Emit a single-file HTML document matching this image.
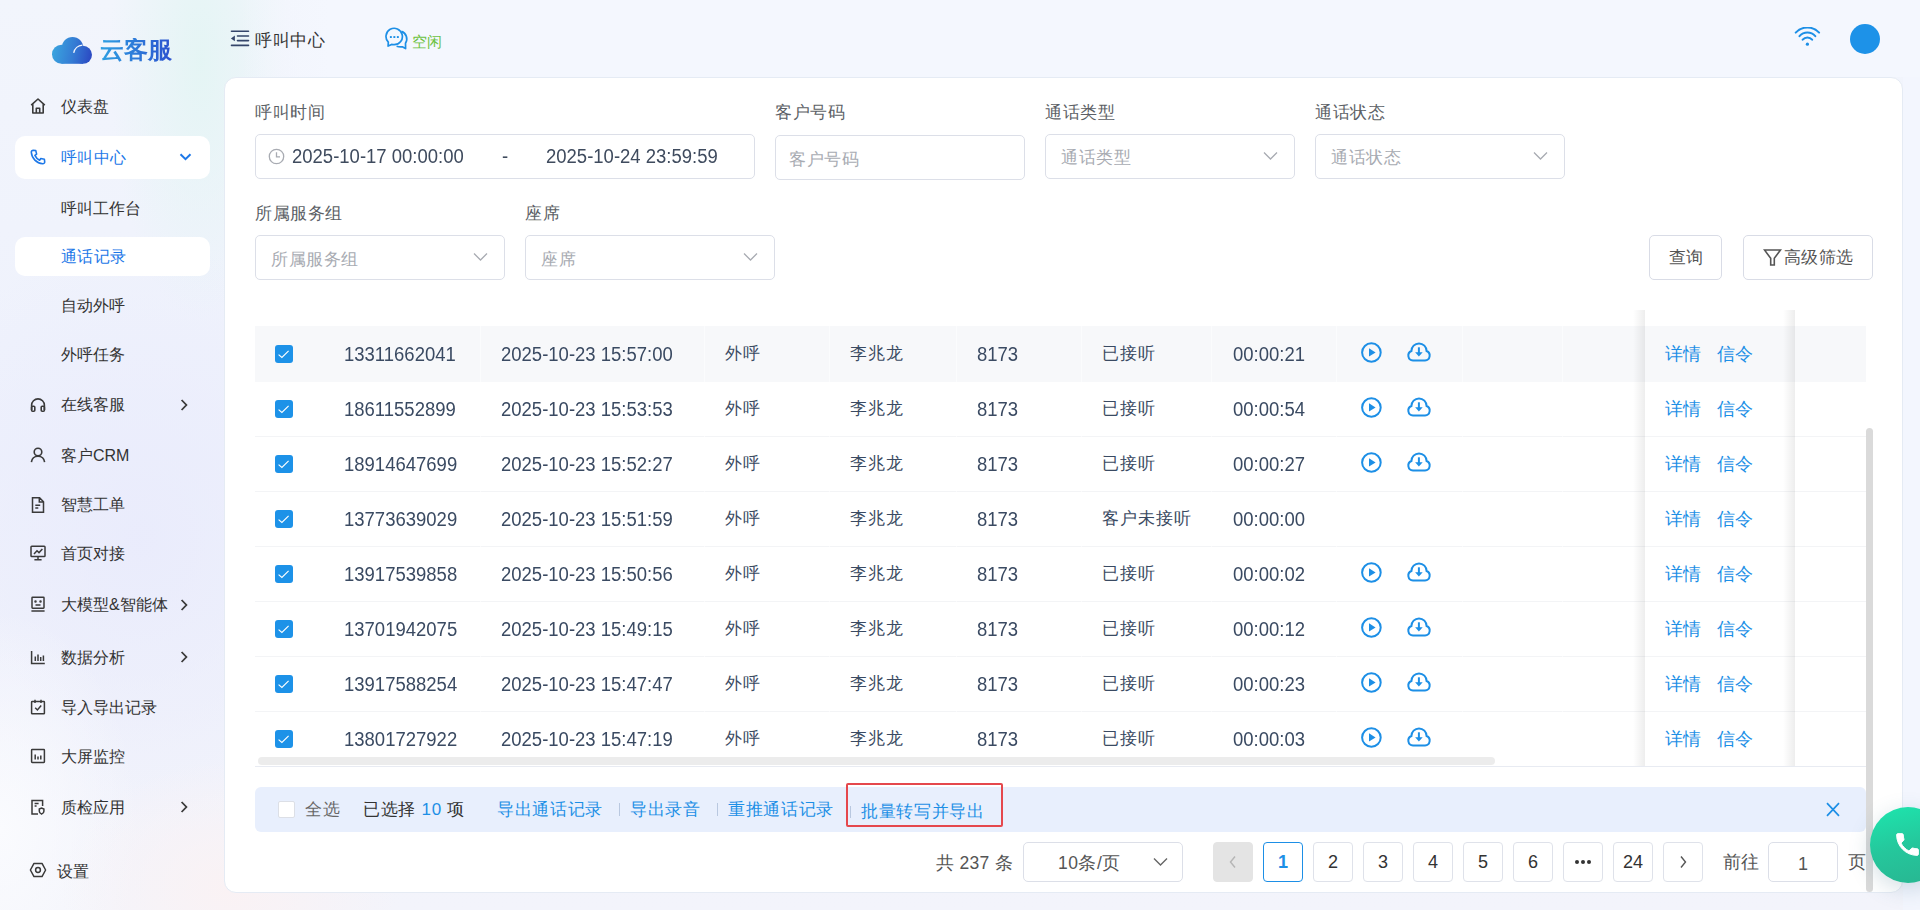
<!DOCTYPE html>
<html><head><meta charset="utf-8"><title>通话记录</title>
<style>
*{margin:0;padding:0;box-sizing:border-box}
html,body{width:1920px;height:910px;overflow:hidden}
body{position:relative;font-family:"Liberation Sans",sans-serif;color:#333;
 background:#f3f6fd;}
.a{position:absolute;white-space:nowrap;line-height:1}
.bg{position:absolute;left:0;top:0;width:1920px;height:910px;
 background:
  radial-gradient(ellipse 90px 260px at 200px 60px, rgba(226,245,243,0.85), rgba(226,245,243,0) 100%),
  radial-gradient(ellipse 170px 130px at 230px 890px, rgba(250,242,244,1), rgba(250,242,244,0) 100%),
  radial-gradient(ellipse 140px 220px at 0px 830px, rgba(250,251,254,1), rgba(250,251,254,0) 100%),
  radial-gradient(ellipse 260px 300px at 140px 540px, rgba(233,235,252,0.9), rgba(233,235,252,0) 100%),
  linear-gradient(180deg,#f2f5fc 0%, #eef1fc 50%, #f3f4fb 100%);}
.hdr{position:absolute;left:240px;top:0;width:1680px;height:77px;background:linear-gradient(90deg,rgba(244,247,254,0) 0px,#f4f7fe 90px,#f4f7fe 100%)}
.rbg{position:absolute;left:1903px;top:77px;width:17px;height:833px;background:#f3f6fe}
.bbg{position:absolute;left:225px;top:891px;width:1695px;height:19px;background:#f1f4fc}
.card{position:absolute;left:224px;top:77px;width:1679px;height:816px;background:#fff;border-radius:12px;border:1px solid #e5ebf4}
.logo{font-size:24px;font-weight:600;background:linear-gradient(90deg,#2ea0e2,#2b52cf);-webkit-background-clip:text;color:transparent}
.menu{font-size:16px;letter-spacing:0.3px;color:#363636}
.menu.act{color:#1d78e8}
.mact{position:absolute;left:15px;width:195px;background:#fff;border-radius:10px}
.lbl{font-size:17px;letter-spacing:0.6px;color:#5c5f66}
.inp{position:absolute;height:45px;border:1px solid #dcdfe8;border-radius:5px;background:#fff}
.ph{font-size:17px;letter-spacing:0.6px;color:#a8abb2}
.btn{position:absolute;height:45px;border:1px solid #d9dce6;border-radius:5px;background:#fff}
.btxt{font-size:17px;letter-spacing:0.3px;color:#555}
.row{position:absolute;left:255px;width:1611px;height:55px;border-bottom:1px solid #f3f4f6}
.row.hov{background:#f7f8fa;border-bottom-color:#f7f8fa}
.cb{position:absolute;width:18px;height:18px;border-radius:3px}
.cb.on{background:#1d92e8}
.td{font-size:18.5px;color:#3a4a62}
.lnk{font-size:18px;color:#1d8fe6}
.fix{position:absolute;top:310px;height:456px;background:#fff}
.sel{position:absolute;left:255px;top:787px;width:1611px;height:45px;background:#e8effd;border-radius:6px}
.stx{font-size:17px;letter-spacing:0.7px}
.pg{position:absolute;top:842px;width:40px;height:40px;border:1px solid #dfe2ea;border-radius:4px;background:#fff;font-size:18px;color:#333;text-align:center;line-height:38px}
.td.cn{font-size:17px;letter-spacing:1px}
.td:not(.cn){transform:scaleY(1.08);transform-origin:0 78%}

</style></head><body>
<div class="bg"></div>
<div class="hdr"></div>
<div class="rbg"></div>

<!-- logo -->
<svg class="a" style="left:52px;top:36px" width="41" height="29" viewBox="0 0 41 29"><defs><linearGradient id="lg1" gradientUnits="userSpaceOnUse" x1="0" y1="14" x2="40" y2="22"><stop offset="0" stop-color="#3aa5df"/><stop offset="0.55" stop-color="#3479d3"/><stop offset="1" stop-color="#2b47c2"/></linearGradient></defs><g fill="url(#lg1)"><circle cx="9.5" cy="18.3" r="9.5"/><circle cx="31" cy="18.8" r="9"/><circle cx="20.5" cy="11.6" r="10.7"/><rect x="9.5" y="14" width="21.5" height="13.8"/></g><path d="M21.7 16.9 A9.7 9.7 0 0 1 30.4 9.1" fill="none" stroke="#f2f6fd" stroke-width="1.3"/></svg>
<div class="a logo" style="left:100px;top:38px">云客服</div>
<div class="a menuNone" style="left:61px;top:99px">仪表盘</div>
<div class="mact" style="top:136px;height:43px"></div>
<div class="a menu act" style="left:61px;top:150px">呼叫中心</div>
<div class="a menuNone" style="left:61px;top:201px">呼叫工作台</div>
<div class="mact" style="top:237px;height:39px"></div>
<div class="a menu act" style="left:61px;top:249px">通话记录</div>
<div class="a menuNone" style="left:61px;top:298px">自动外呼</div>
<div class="a menuNone" style="left:61px;top:347px">外呼任务</div>
<div class="a menuNone" style="left:61px;top:397px">在线客服</div>
<div class="a menuNone" style="left:61px;top:448px">客户CRM</div>
<div class="a menuNone" style="left:61px;top:497px">智慧工单</div>
<div class="a menuNone" style="left:61px;top:546px">首页对接</div>
<div class="a menuNone" style="left:61px;top:597px">大模型&amp;智能体</div>
<div class="a menuNone" style="left:61px;top:650px">数据分析</div>
<div class="a menuNone" style="left:61px;top:700px">导入导出记录</div>
<div class="a menuNone" style="left:61px;top:749px">大屏监控</div>
<div class="a menuNone" style="left:61px;top:800px">质检应用</div>
<div class="a menuNone" style="left:57px;top:864px">设置</div>
<!-- sidebar icons -->
<svg class="a" style="left:29px;top:97px" width="18" height="18" viewBox="0 0 18 18" fill="none" stroke="#3a3a3a" stroke-width="1.6" stroke-linejoin="round"><path d="M2.2 8.2 L9 2 L15.8 8.2 M3.8 6.9 V16 H14.2 V6.9 M7.3 16 V11.3 H10.7 V16"/></svg>
<svg class="a" style="left:29px;top:148px" width="18" height="18" viewBox="0 0 18 18" fill="none" stroke="#1d78e8" stroke-width="1.6" stroke-linejoin="round"><path d="M4.2 2.3 L6.8 2.6 L7.6 6.2 L5.9 7.4 C6.9 9.6 8.5 11.2 10.6 12.2 L11.8 10.5 L15.4 11.3 L15.7 13.9 C15.7 15 14.8 15.8 13.7 15.7 C7.5 15.2 2.8 10.5 2.3 4.3 C2.2 3.2 3.1 2.3 4.2 2.3 Z"/></svg>
<svg class="a" style="left:179px;top:152px" width="13" height="10" viewBox="0 0 13 10" fill="none" stroke="#1d78e8" stroke-width="2"><path d="M1.5 2.2 L6.5 7.2 L11.5 2.2"/></svg>
<svg class="a" style="left:29px;top:396px" width="18" height="18" viewBox="0 0 18 18" fill="none" stroke="#3a3a3a" stroke-width="1.6"><path d="M2.6 14 V9.3 A6.4 6.4 0 0 1 15.4 9.3 V14"/><rect x="2.6" y="10.3" width="3.2" height="5" rx="1"/><rect x="12.2" y="10.3" width="3.2" height="5" rx="1"/></svg>
<svg class="a" style="left:179px;top:398px" width="10" height="14" viewBox="0 0 10 14" fill="none" stroke="#3a3a3a" stroke-width="1.8"><path d="M2.6 2 L7.4 7 L2.6 12"/></svg>
<svg class="a" style="left:29px;top:446px" width="18" height="18" viewBox="0 0 18 18" fill="none" stroke="#3a3a3a" stroke-width="1.6"><circle cx="9" cy="6" r="3.8"/><path d="M2.4 16.2 C2.9 12.3 5.6 10.3 9 10.3 C12.4 10.3 15.1 12.3 15.6 16.2"/></svg>
<svg class="a" style="left:29px;top:496px" width="18" height="18" viewBox="0 0 18 18" fill="none" stroke="#3a3a3a" stroke-width="1.5"><path d="M3.5 1.8 H10.6 L14.5 5.7 V16.2 H3.5 Z M10.3 1.8 V6 H14.5 M6.3 9.2 H11.2 M6.3 12 H9.3"/></svg>
<svg class="a" style="left:29px;top:544px" width="18" height="18" viewBox="0 0 18 18" fill="none" stroke="#3a3a3a" stroke-width="1.5"><rect x="2" y="2.2" width="14" height="10.3" rx="0.8"/><path d="M5 10 L8 6.8 L10 8.6 L13.4 5 M9 12.5 V15.6 M5.4 15.8 H12.6"/></svg>
<svg class="a" style="left:29px;top:595px" width="18" height="18" viewBox="0 0 18 18" fill="none" stroke="#3a3a3a" stroke-width="1.5"><rect x="3" y="2.2" width="12" height="11" rx="0.6"/><path d="M2.4 16 H15.6 M6.5 10 H11.5"/><circle cx="6.5" cy="6.6" r="0.5" fill="#3a3a3a"/><circle cx="11.5" cy="6.6" r="0.5" fill="#3a3a3a"/></svg>
<svg class="a" style="left:179px;top:598px" width="10" height="14" viewBox="0 0 10 14" fill="none" stroke="#3a3a3a" stroke-width="1.8"><path d="M2.6 2 L7.4 7 L2.6 12"/></svg>
<svg class="a" style="left:29px;top:648px" width="18" height="18" viewBox="0 0 18 18" fill="none" stroke="#3a3a3a" stroke-width="1.5"><path d="M2.6 3 V15.6 H15.8 M6.3 13 V8.5 M9 13 V6.5 M11.7 13 V9 M14.4 13 V7.5"/></svg>
<svg class="a" style="left:179px;top:650px" width="10" height="14" viewBox="0 0 10 14" fill="none" stroke="#3a3a3a" stroke-width="1.8"><path d="M2.6 2 L7.4 7 L2.6 12"/></svg>
<svg class="a" style="left:29px;top:698px" width="18" height="18" viewBox="0 0 18 18" fill="none" stroke="#3a3a3a" stroke-width="1.5"><rect x="2.6" y="3.6" width="12.8" height="12.2" rx="0.6"/><path d="M6 1.8 V5 M12 1.8 V5 M6.2 9.8 L8.4 12 L12.2 7.6"/></svg>
<svg class="a" style="left:29px;top:747px" width="18" height="18" viewBox="0 0 18 18" fill="none" stroke="#3a3a3a" stroke-width="1.5"><rect x="2.6" y="2.6" width="12.8" height="12.8" rx="0.6"/><path d="M6.2 12.6 V7.4 M9 12.6 V9.6 M11.8 12.6 V8.6"/></svg>
<svg class="a" style="left:29px;top:798px" width="18" height="18" viewBox="0 0 18 18" fill="none" stroke="#3a3a3a" stroke-width="1.5"><path d="M9 16 H3 V2.4 H13.6 V8 M5.6 5.4 H9.6 M5.6 8 H7.6"/><path d="M10.3 11 L12.6 10 L14.9 11 V13.2 C14.9 14.6 13.9 15.6 12.6 16.1 C11.3 15.6 10.3 14.6 10.3 13.2 Z"/></svg>
<svg class="a" style="left:179px;top:800px" width="10" height="14" viewBox="0 0 10 14" fill="none" stroke="#3a3a3a" stroke-width="1.8"><path d="M2.6 2 L7.4 7 L2.6 12"/></svg>
<svg class="a" style="left:29px;top:862px" width="18" height="16" viewBox="0 0 18 16" fill="none" stroke="#3a3a3a" stroke-width="1.5" stroke-linejoin="round"><path d="M5 1.4 H13 L16.6 8 L13 14.6 H5 L1.4 8 Z"/><circle cx="9" cy="8" r="2.4"/></svg>

<!-- header -->
<svg class="a" style="left:230px;top:30px" width="20" height="17" viewBox="0 0 20 17" fill="none" stroke="#34456a" stroke-width="1.6" stroke-linecap="round"><path d="M1.5 1.3 H18.5 M7.5 6 H18.5 M7.5 10.6 H18.5 M1.5 15.4 H18.5"/><path d="M0.9 8.4 L4.9 5.6 V11.2 Z" fill="#34456a" stroke="none"/></svg>
<div class="a" style="left:255px;top:32px;font-size:17px;letter-spacing:0.5px;color:#333">呼叫中心</div>
<svg class="a" style="left:384px;top:27px" width="25" height="23" viewBox="0 0 25 23" fill="none" stroke="#1d8fe6" stroke-width="1.7" stroke-linejoin="round"><path d="M10.2 17.7 A8.2 8.2 0 1 0 4.3 15.2 L4.1 19.1 L7.6 17.4 C8.4 17.6 9.3 17.7 10.2 17.7 Z"/><path d="M17.4 4.4 A8 8 0 0 1 21.5 16.3 L21.6 21.6 L18.3 19.8 C16.4 20.1 14.5 19.9 12.6 19.2"/><rect x="5.9" y="9.1" width="1.9" height="1.9" fill="#1d8fe6" stroke="none"/><rect x="9.4" y="9.1" width="1.9" height="1.9" fill="#1d8fe6" stroke="none"/><rect x="12.9" y="9.1" width="1.9" height="1.9" fill="#1d8fe6" stroke="none"/></svg>
<div class="a" style="left:412px;top:34px;font-size:15px;color:#6cc23f">空闲</div>
<svg class="a" style="left:1794px;top:27px" width="27" height="21" viewBox="0 0 27 21" fill="none" stroke="#1d8fe6" stroke-width="2" stroke-linecap="round"><path d="M1.7 5.6 A16 16 0 0 1 25.1 5.6 M5.5 9.2 A10.5 10.5 0 0 1 21.3 9.2 M8.7 12.7 A6 6 0 0 1 18.1 12.7"/><circle cx="13.4" cy="17.2" r="1.6" fill="#1d8fe6" stroke="none"/></svg>
<div class="a" style="left:1850px;top:24px;width:30px;height:30px;border-radius:50%;background:#1d92e8"></div>
<!-- card -->
<div class="card"></div>
<div class="a lbl" style="left:255px;top:104px">呼叫时间</div>
<div class="inp" style="left:255px;top:134px;width:500px"></div>
<svg class="a" style="left:268px;top:148px" width="17" height="17" viewBox="0 0 17 17" fill="none" stroke="#a8abb2" stroke-width="1.3"><circle cx="8.5" cy="8.5" r="7.2"/><path d="M8.5 4.3 V8.8 H12"/></svg>
<div class="a td" style="left:292px;top:148px;color:#3f4b5e">2025-10-17 00:00:00</div>
<div class="a td" style="left:502px;top:148px;color:#3f4b5e">-</div>
<div class="a td" style="left:546px;top:148px;color:#3f4b5e">2025-10-24 23:59:59</div>
<div class="a lbl" style="left:775px;top:104px">客户号码</div>
<div class="inp" style="left:775px;top:135px;width:250px"></div>
<div class="a ph" style="left:789px;top:151px">客户号码</div>
<div class="a lbl" style="left:1045px;top:104px">通话类型</div>
<div class="inp" style="left:1045px;top:134px;width:250px"></div>
<div class="a ph" style="left:1061px;top:149px">通话类型</div>
<svg class="a" style="left:1263px;top:151px" width="15" height="10" viewBox="0 0 15 10" fill="none" stroke="#a8abb2" stroke-width="1.3"><path d="M1 1.5 L7.5 8 L14 1.5"/></svg>
<div class="a lbl" style="left:1315px;top:104px">通话状态</div>
<div class="inp" style="left:1315px;top:134px;width:250px"></div>
<div class="a ph" style="left:1331px;top:149px">通话状态</div>
<svg class="a" style="left:1533px;top:151px" width="15" height="10" viewBox="0 0 15 10" fill="none" stroke="#a8abb2" stroke-width="1.3"><path d="M1 1.5 L7.5 8 L14 1.5"/></svg>
<div class="a lbl" style="left:255px;top:205px">所属服务组</div>
<div class="inp" style="left:255px;top:235px;width:250px"></div>
<div class="a ph" style="left:271px;top:251px">所属服务组</div>
<svg class="a" style="left:473px;top:252px" width="15" height="10" viewBox="0 0 15 10" fill="none" stroke="#a8abb2" stroke-width="1.3"><path d="M1 1.5 L7.5 8 L14 1.5"/></svg>
<div class="a lbl" style="left:525px;top:205px">座席</div>
<div class="inp" style="left:525px;top:235px;width:250px"></div>
<div class="a ph" style="left:541px;top:251px">座席</div>
<svg class="a" style="left:743px;top:252px" width="15" height="10" viewBox="0 0 15 10" fill="none" stroke="#a8abb2" stroke-width="1.3"><path d="M1 1.5 L7.5 8 L14 1.5"/></svg>
<div class="btn" style="left:1649px;top:235px;width:73px"></div>
<div class="a btxt" style="left:1669px;top:249px">查询</div>
<div class="btn" style="left:1743px;top:235px;width:130px"></div>
<svg class="a" style="left:1763px;top:248px" width="19" height="19" viewBox="0 0 19 19" fill="none" stroke="#555" stroke-width="1.6"><path d="M1.5 2 H17.5 L11.3 10.3 V17 H7.7 V10.3 Z"/></svg>
<div class="a btxt" style="left:1784px;top:249px">高级筛选</div>
<!-- table -->
<div class="row hov" style="top:326px;height:56px"></div>
<div class="row" style="top:382px"></div>
<div class="row" style="top:437px"></div>
<div class="row" style="top:492px"></div>
<div class="row" style="top:547px"></div>
<div class="row" style="top:602px"></div>
<div class="row" style="top:657px"></div>
<div class="row" style="top:712px"></div>
<div class="a" style="left:480px;top:326px;width:1px;height:440px;background:rgba(255,255,255,0.55)"></div><div class="a" style="left:704px;top:326px;width:1px;height:440px;background:rgba(255,255,255,0.55)"></div><div class="a" style="left:829px;top:326px;width:1px;height:440px;background:rgba(255,255,255,0.55)"></div><div class="a" style="left:956px;top:326px;width:1px;height:440px;background:rgba(255,255,255,0.55)"></div><div class="a" style="left:1081px;top:326px;width:1px;height:440px;background:rgba(255,255,255,0.55)"></div><div class="a" style="left:1211px;top:326px;width:1px;height:440px;background:rgba(255,255,255,0.55)"></div><div class="a" style="left:1336px;top:326px;width:1px;height:440px;background:rgba(255,255,255,0.55)"></div><div class="a" style="left:1462px;top:326px;width:1px;height:440px;background:rgba(255,255,255,0.55)"></div><div class="a" style="left:1562px;top:326px;width:1px;height:440px;background:rgba(255,255,255,0.55)"></div>
<div class="cb on" style="left:275px;top:345px"><svg width="18" height="18" viewBox="0 0 18 18"><path d="M3.6 9.6 L6.9 12.4 L13.6 5.8" fill="none" stroke="#fff" stroke-width="1.15"/></svg></div>
<div class="a td" style="left:344px;top:345.5px;">13311662041</div>
<div class="a td" style="left:501px;top:345.5px;">2025-10-23 15:57:00</div>
<div class="a td cn" style="left:725px;top:345px;">外呼</div>
<div class="a td cn" style="left:850px;top:345px;">李兆龙</div>
<div class="a td" style="left:977px;top:345.5px;">8173</div>
<div class="a td cn" style="left:1102px;top:345px;">已接听</div>
<div class="a td" style="left:1233px;top:345.5px;">00:00:21</div>
<svg class="a" style="left:1360px;top:341px" width="23" height="23" viewBox="0 0 23 23"><circle cx="11.4" cy="11.5" r="9.3" fill="none" stroke="#1d8fe6" stroke-width="2"/><path d="M9 7.2 L15.6 11.5 L9 15.6 Z" fill="#1d8fe6"/></svg>
<svg class="a" style="left:1406px;top:341px" width="26" height="22" viewBox="0 0 26 22"><path d="M7 19.6 H19 A5 5 0 0 0 20.6 10 A7.6 7.6 0 0 0 5.4 10 A5 5 0 0 0 7 19.6 Z" fill="none" stroke="#1d8fe6" stroke-width="2"/><path d="M12.9 6.3 V13" stroke="#1d8fe6" stroke-width="2"/><path d="M9.1 11.2 L12.9 15.6 L16.7 11.2 Z" fill="#1d8fe6"/></svg>
<div class="cb on" style="left:275px;top:400px"><svg width="18" height="18" viewBox="0 0 18 18"><path d="M3.6 9.6 L6.9 12.4 L13.6 5.8" fill="none" stroke="#fff" stroke-width="1.15"/></svg></div>
<div class="a td" style="left:344px;top:400.5px;">18611552899</div>
<div class="a td" style="left:501px;top:400.5px;">2025-10-23 15:53:53</div>
<div class="a td cn" style="left:725px;top:400px;">外呼</div>
<div class="a td cn" style="left:850px;top:400px;">李兆龙</div>
<div class="a td" style="left:977px;top:400.5px;">8173</div>
<div class="a td cn" style="left:1102px;top:400px;">已接听</div>
<div class="a td" style="left:1233px;top:400.5px;">00:00:54</div>
<svg class="a" style="left:1360px;top:396px" width="23" height="23" viewBox="0 0 23 23"><circle cx="11.4" cy="11.5" r="9.3" fill="none" stroke="#1d8fe6" stroke-width="2"/><path d="M9 7.2 L15.6 11.5 L9 15.6 Z" fill="#1d8fe6"/></svg>
<svg class="a" style="left:1406px;top:396px" width="26" height="22" viewBox="0 0 26 22"><path d="M7 19.6 H19 A5 5 0 0 0 20.6 10 A7.6 7.6 0 0 0 5.4 10 A5 5 0 0 0 7 19.6 Z" fill="none" stroke="#1d8fe6" stroke-width="2"/><path d="M12.9 6.3 V13" stroke="#1d8fe6" stroke-width="2"/><path d="M9.1 11.2 L12.9 15.6 L16.7 11.2 Z" fill="#1d8fe6"/></svg>
<div class="cb on" style="left:275px;top:455px"><svg width="18" height="18" viewBox="0 0 18 18"><path d="M3.6 9.6 L6.9 12.4 L13.6 5.8" fill="none" stroke="#fff" stroke-width="1.15"/></svg></div>
<div class="a td" style="left:344px;top:455.5px;">18914647699</div>
<div class="a td" style="left:501px;top:455.5px;">2025-10-23 15:52:27</div>
<div class="a td cn" style="left:725px;top:455px;">外呼</div>
<div class="a td cn" style="left:850px;top:455px;">李兆龙</div>
<div class="a td" style="left:977px;top:455.5px;">8173</div>
<div class="a td cn" style="left:1102px;top:455px;">已接听</div>
<div class="a td" style="left:1233px;top:455.5px;">00:00:27</div>
<svg class="a" style="left:1360px;top:451px" width="23" height="23" viewBox="0 0 23 23"><circle cx="11.4" cy="11.5" r="9.3" fill="none" stroke="#1d8fe6" stroke-width="2"/><path d="M9 7.2 L15.6 11.5 L9 15.6 Z" fill="#1d8fe6"/></svg>
<svg class="a" style="left:1406px;top:451px" width="26" height="22" viewBox="0 0 26 22"><path d="M7 19.6 H19 A5 5 0 0 0 20.6 10 A7.6 7.6 0 0 0 5.4 10 A5 5 0 0 0 7 19.6 Z" fill="none" stroke="#1d8fe6" stroke-width="2"/><path d="M12.9 6.3 V13" stroke="#1d8fe6" stroke-width="2"/><path d="M9.1 11.2 L12.9 15.6 L16.7 11.2 Z" fill="#1d8fe6"/></svg>
<div class="cb on" style="left:275px;top:510px"><svg width="18" height="18" viewBox="0 0 18 18"><path d="M3.6 9.6 L6.9 12.4 L13.6 5.8" fill="none" stroke="#fff" stroke-width="1.15"/></svg></div>
<div class="a td" style="left:344px;top:510.5px;">13773639029</div>
<div class="a td" style="left:501px;top:510.5px;">2025-10-23 15:51:59</div>
<div class="a td cn" style="left:725px;top:510px;">外呼</div>
<div class="a td cn" style="left:850px;top:510px;">李兆龙</div>
<div class="a td" style="left:977px;top:510.5px;">8173</div>
<div class="a td cn" style="left:1102px;top:510px;">客户未接听</div>
<div class="a td" style="left:1233px;top:510.5px;">00:00:00</div>
<div class="cb on" style="left:275px;top:565px"><svg width="18" height="18" viewBox="0 0 18 18"><path d="M3.6 9.6 L6.9 12.4 L13.6 5.8" fill="none" stroke="#fff" stroke-width="1.15"/></svg></div>
<div class="a td" style="left:344px;top:565.5px;">13917539858</div>
<div class="a td" style="left:501px;top:565.5px;">2025-10-23 15:50:56</div>
<div class="a td cn" style="left:725px;top:565px;">外呼</div>
<div class="a td cn" style="left:850px;top:565px;">李兆龙</div>
<div class="a td" style="left:977px;top:565.5px;">8173</div>
<div class="a td cn" style="left:1102px;top:565px;">已接听</div>
<div class="a td" style="left:1233px;top:565.5px;">00:00:02</div>
<svg class="a" style="left:1360px;top:561px" width="23" height="23" viewBox="0 0 23 23"><circle cx="11.4" cy="11.5" r="9.3" fill="none" stroke="#1d8fe6" stroke-width="2"/><path d="M9 7.2 L15.6 11.5 L9 15.6 Z" fill="#1d8fe6"/></svg>
<svg class="a" style="left:1406px;top:561px" width="26" height="22" viewBox="0 0 26 22"><path d="M7 19.6 H19 A5 5 0 0 0 20.6 10 A7.6 7.6 0 0 0 5.4 10 A5 5 0 0 0 7 19.6 Z" fill="none" stroke="#1d8fe6" stroke-width="2"/><path d="M12.9 6.3 V13" stroke="#1d8fe6" stroke-width="2"/><path d="M9.1 11.2 L12.9 15.6 L16.7 11.2 Z" fill="#1d8fe6"/></svg>
<div class="cb on" style="left:275px;top:620px"><svg width="18" height="18" viewBox="0 0 18 18"><path d="M3.6 9.6 L6.9 12.4 L13.6 5.8" fill="none" stroke="#fff" stroke-width="1.15"/></svg></div>
<div class="a td" style="left:344px;top:620.5px;">13701942075</div>
<div class="a td" style="left:501px;top:620.5px;">2025-10-23 15:49:15</div>
<div class="a td cn" style="left:725px;top:620px;">外呼</div>
<div class="a td cn" style="left:850px;top:620px;">李兆龙</div>
<div class="a td" style="left:977px;top:620.5px;">8173</div>
<div class="a td cn" style="left:1102px;top:620px;">已接听</div>
<div class="a td" style="left:1233px;top:620.5px;">00:00:12</div>
<svg class="a" style="left:1360px;top:616px" width="23" height="23" viewBox="0 0 23 23"><circle cx="11.4" cy="11.5" r="9.3" fill="none" stroke="#1d8fe6" stroke-width="2"/><path d="M9 7.2 L15.6 11.5 L9 15.6 Z" fill="#1d8fe6"/></svg>
<svg class="a" style="left:1406px;top:616px" width="26" height="22" viewBox="0 0 26 22"><path d="M7 19.6 H19 A5 5 0 0 0 20.6 10 A7.6 7.6 0 0 0 5.4 10 A5 5 0 0 0 7 19.6 Z" fill="none" stroke="#1d8fe6" stroke-width="2"/><path d="M12.9 6.3 V13" stroke="#1d8fe6" stroke-width="2"/><path d="M9.1 11.2 L12.9 15.6 L16.7 11.2 Z" fill="#1d8fe6"/></svg>
<div class="cb on" style="left:275px;top:675px"><svg width="18" height="18" viewBox="0 0 18 18"><path d="M3.6 9.6 L6.9 12.4 L13.6 5.8" fill="none" stroke="#fff" stroke-width="1.15"/></svg></div>
<div class="a td" style="left:344px;top:675.5px;">13917588254</div>
<div class="a td" style="left:501px;top:675.5px;">2025-10-23 15:47:47</div>
<div class="a td cn" style="left:725px;top:675px;">外呼</div>
<div class="a td cn" style="left:850px;top:675px;">李兆龙</div>
<div class="a td" style="left:977px;top:675.5px;">8173</div>
<div class="a td cn" style="left:1102px;top:675px;">已接听</div>
<div class="a td" style="left:1233px;top:675.5px;">00:00:23</div>
<svg class="a" style="left:1360px;top:671px" width="23" height="23" viewBox="0 0 23 23"><circle cx="11.4" cy="11.5" r="9.3" fill="none" stroke="#1d8fe6" stroke-width="2"/><path d="M9 7.2 L15.6 11.5 L9 15.6 Z" fill="#1d8fe6"/></svg>
<svg class="a" style="left:1406px;top:671px" width="26" height="22" viewBox="0 0 26 22"><path d="M7 19.6 H19 A5 5 0 0 0 20.6 10 A7.6 7.6 0 0 0 5.4 10 A5 5 0 0 0 7 19.6 Z" fill="none" stroke="#1d8fe6" stroke-width="2"/><path d="M12.9 6.3 V13" stroke="#1d8fe6" stroke-width="2"/><path d="M9.1 11.2 L12.9 15.6 L16.7 11.2 Z" fill="#1d8fe6"/></svg>
<div class="cb on" style="left:275px;top:730px"><svg width="18" height="18" viewBox="0 0 18 18"><path d="M3.6 9.6 L6.9 12.4 L13.6 5.8" fill="none" stroke="#fff" stroke-width="1.15"/></svg></div>
<div class="a td" style="left:344px;top:730.5px;">13801727922</div>
<div class="a td" style="left:501px;top:730.5px;">2025-10-23 15:47:19</div>
<div class="a td cn" style="left:725px;top:730px;">外呼</div>
<div class="a td cn" style="left:850px;top:730px;">李兆龙</div>
<div class="a td" style="left:977px;top:730.5px;">8173</div>
<div class="a td cn" style="left:1102px;top:730px;">已接听</div>
<div class="a td" style="left:1233px;top:730.5px;">00:00:03</div>
<svg class="a" style="left:1360px;top:726px" width="23" height="23" viewBox="0 0 23 23"><circle cx="11.4" cy="11.5" r="9.3" fill="none" stroke="#1d8fe6" stroke-width="2"/><path d="M9 7.2 L15.6 11.5 L9 15.6 Z" fill="#1d8fe6"/></svg>
<svg class="a" style="left:1406px;top:726px" width="26" height="22" viewBox="0 0 26 22"><path d="M7 19.6 H19 A5 5 0 0 0 20.6 10 A7.6 7.6 0 0 0 5.4 10 A5 5 0 0 0 7 19.6 Z" fill="none" stroke="#1d8fe6" stroke-width="2"/><path d="M12.9 6.3 V13" stroke="#1d8fe6" stroke-width="2"/><path d="M9.1 11.2 L12.9 15.6 L16.7 11.2 Z" fill="#1d8fe6"/></svg>
<div class="a" style="left:258px;top:757px;width:1237px;height:8px;border-radius:4px;background:#ececec"></div>
<div class="a" style="left:255px;top:766px;width:1611px;height:1px;background:#e8ebf2"></div>
<!-- fixed cols -->
<div class="fix" style="left:1645px;width:150px"></div>
<div class="fix" style="left:1795px;width:71px"></div>
<div class="a" style="left:1645px;top:326px;width:221px;height:56px;background:#f7f8fa"></div>
<div class="a" style="left:1645px;top:436px;width:221px;height:1px;background:#f3f4f6"></div>
<div class="a" style="left:1645px;top:491px;width:221px;height:1px;background:#f3f4f6"></div>
<div class="a" style="left:1645px;top:546px;width:221px;height:1px;background:#f3f4f6"></div>
<div class="a" style="left:1645px;top:601px;width:221px;height:1px;background:#f3f4f6"></div>
<div class="a" style="left:1645px;top:656px;width:221px;height:1px;background:#f3f4f6"></div>
<div class="a" style="left:1645px;top:711px;width:221px;height:1px;background:#f3f4f6"></div>
<div class="fix" style="left:1633px;width:12px;background:linear-gradient(90deg,rgba(0,0,0,0),rgba(0,0,0,0.07))"></div>
<div class="fix" style="left:1783px;width:12px;background:linear-gradient(90deg,rgba(0,0,0,0),rgba(0,0,0,0.07))"></div>
<div class="a lnk" style="left:1665px;top:345px;">详情</div>
<div class="a lnk" style="left:1717px;top:345px;">信令</div>
<div class="a lnk" style="left:1665px;top:400px;">详情</div>
<div class="a lnk" style="left:1717px;top:400px;">信令</div>
<div class="a lnk" style="left:1665px;top:455px;">详情</div>
<div class="a lnk" style="left:1717px;top:455px;">信令</div>
<div class="a lnk" style="left:1665px;top:510px;">详情</div>
<div class="a lnk" style="left:1717px;top:510px;">信令</div>
<div class="a lnk" style="left:1665px;top:565px;">详情</div>
<div class="a lnk" style="left:1717px;top:565px;">信令</div>
<div class="a lnk" style="left:1665px;top:620px;">详情</div>
<div class="a lnk" style="left:1717px;top:620px;">信令</div>
<div class="a lnk" style="left:1665px;top:675px;">详情</div>
<div class="a lnk" style="left:1717px;top:675px;">信令</div>
<div class="a lnk" style="left:1665px;top:730px;">详情</div>
<div class="a lnk" style="left:1717px;top:730px;">信令</div>
<div class="a" style="left:1866px;top:428px;width:7px;height:464px;border-radius:4px;background:#dadada"></div>
<!-- selection bar -->
<div class="sel"></div>
<div class="cb" style="left:278px;top:801px;width:17px;height:17px;background:#fff;border:1px solid #dcdfe6;border-radius:2px"></div>
<div class="a stx" style="left:305px;top:801px;color:#666">全选</div>
<div class="a stx" style="left:363px;top:801px;color:#333">已选择 <span style="color:#1d8fe6">10</span> 项</div>
<div class="a stx" style="left:497px;top:801px;color:#1d8fe6">导出通话记录</div>
<div class="a" style="left:619px;top:803px;width:1px;height:13px;background:#b9c8e0"></div>
<div class="a stx" style="left:630px;top:801px;color:#1d8fe6">导出录音</div>
<div class="a" style="left:717px;top:803px;width:1px;height:13px;background:#b9c8e0"></div>
<div class="a stx" style="left:728px;top:801px;color:#1d8fe6">重推通话记录</div>
<div class="a" style="left:850px;top:806px;width:1px;height:12px;background:#b9c8e0"></div>
<div class="a stx" style="left:861px;top:803px;color:#1d8fe6">批量转写并导出</div>
<div class="a" style="left:846px;top:783px;width:157px;height:44px;border:2px solid #e5484d;border-radius:2px"></div>
<svg class="a" style="left:1826px;top:802px" width="14" height="15" viewBox="0 0 14 15" stroke="#1d8fe6" stroke-width="1.7"><path d="M1 1.2 L13 13.8 M13 1.2 L1 13.8"/></svg>
<!-- pagination -->
<div class="a" style="left:936px;top:855px;font-size:17.5px;letter-spacing:0.3px;color:#555">共 237 条</div>
<div class="inp" style="left:1023px;top:842px;width:160px;height:40px"></div>
<div class="a" style="left:1058px;top:855px;font-size:17.5px;letter-spacing:0.5px;color:#555">10条/页</div>
<svg class="a" style="left:1153px;top:857px" width="15" height="10" viewBox="0 0 15 10" fill="none" stroke="#666" stroke-width="1.4"><path d="M1 1.5 L7.5 8 L14 1.5"/></svg>
<div class="pg" style="left:1213px;background:#e4e4e4;border-color:#e4e4e4"></div>
<svg class="a" style="left:1228px;top:855px" width="10" height="14" viewBox="0 0 10 14" fill="none" stroke="#b5b5b5" stroke-width="1.4"><path d="M7 1.5 L2.5 7 L7 12.5"/></svg>
<div class="pg" style="left:1263px;border-color:#1d8fe6;color:#1d8fe6;font-weight:bold">1</div>
<div class="pg" style="left:1313px">2</div>
<div class="pg" style="left:1363px">3</div>
<div class="pg" style="left:1413px">4</div>
<div class="pg" style="left:1463px">5</div>
<div class="pg" style="left:1513px">6</div>
<div class="pg" style="left:1563px"></div>
<svg class="a" style="left:1574px;top:859px" width="18" height="6" viewBox="0 0 18 6" fill="#333"><circle cx="3" cy="3" r="2"/><circle cx="9" cy="3" r="2"/><circle cx="15" cy="3" r="2"/></svg>
<div class="pg" style="left:1613px">24</div>
<div class="pg" style="left:1663px"></div>
<svg class="a" style="left:1678px;top:855px" width="10" height="14" viewBox="0 0 10 14" fill="none" stroke="#555" stroke-width="1.4"><path d="M3 1.5 L7.5 7 L3 12.5"/></svg>
<div class="a" style="left:1723px;top:854px;font-size:17.5px;color:#555">前往</div>
<div class="inp" style="left:1768px;top:842px;width:70px;height:40px"></div>
<div class="a" style="left:1798px;top:855px;font-size:18px;color:#555">1</div>
<div class="a" style="left:1848px;top:854px;width:18px;overflow:hidden;font-size:17.5px;color:#555">页</div>
<!-- floating phone -->
<div class="a" style="left:1870px;top:807px;width:76px;height:76px;border-radius:50%;background:linear-gradient(165deg,#1de6ae 0%,#25c79c 50%,#28b591 100%);box-shadow:0 6px 22px rgba(60,110,130,0.22)"></div>
<svg class="a" style="left:1893px;top:830px" width="29" height="29" viewBox="0 0 24 24"><path d="M6.62 10.79c1.440 2.830 3.760 5.140 6.590 6.590l2.200-2.200c.270-.270.670-.360 1.020-.240 1.120.370 2.330.570 3.570.570.550 0 1 .450 1 1V20c0 .550-.450 1-1 1-9.390 0-17-7.610-17-17 0-.550.450-1 1-1h3.500c.550 0 1 .450 1 1 0 1.250.200 2.450.570 3.570.110.350.030.740-.250 1.020l-2.200 2.200z" fill="#fff" stroke="#fff" stroke-width="0.8" stroke-linejoin="round"/></svg>

</body></html>
